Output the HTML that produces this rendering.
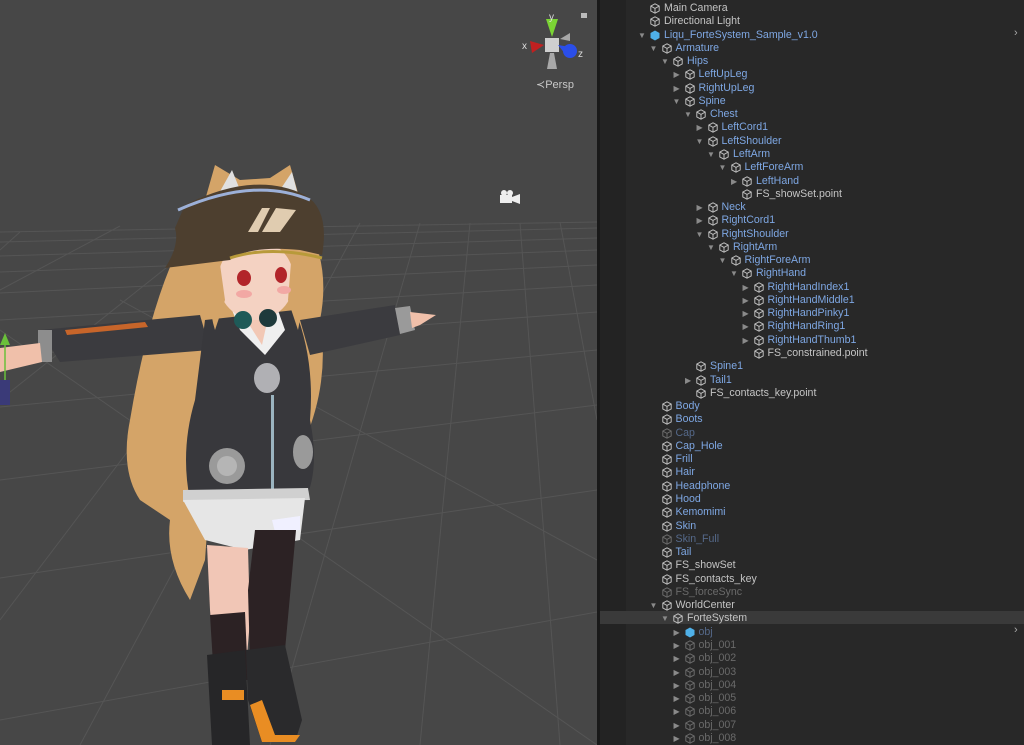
<!DOCTYPE html>
<html><head><meta charset="utf-8"><style>
html,body{margin:0;padding:0;background:#282828;width:1024px;height:745px;overflow:hidden;font-family:"Liberation Sans","DejaVu Sans",sans-serif}
#scene{position:absolute;left:0;top:0;width:597px;height:745px;background:#474747;overflow:hidden}
#div{position:absolute;left:597px;top:0;width:3px;height:745px;background:#191919}
#hier{position:absolute;left:600px;top:0;width:424px;height:745px;background:#282828}
#strip{position:absolute;left:0;top:0;width:26px;height:745px;background:#232323}
.r{position:absolute;height:13px;font-size:10.6px;line-height:13px;white-space:nowrap;color:#c4c4c4}
.r svg{position:absolute;left:0;top:1px}
.r .t{position:absolute;left:14px;top:0}
.a{position:absolute;font-size:8px;color:#8a8a8a;top:0;line-height:13px}
.b{color:#7ea7e3}.d{color:#55698a}.g{color:#6a6a6a}
</style></head><body>
<div id="scene">
<svg width="597" height="745" viewBox="0 0 597 745">
<g stroke="#555" stroke-width="1" fill="none">
<line x1="0" y1="232" x2="597" y2="222"/>
<line x1="0" y1="242" x2="597" y2="228"/>
<line x1="0" y1="256" x2="597" y2="238"/>
<line x1="0" y1="272" x2="597" y2="250"/>
<line x1="0" y1="293" x2="597" y2="265"/>
<line x1="0" y1="320" x2="597" y2="285"/>
<line x1="0" y1="356" x2="597" y2="312"/>
<line x1="0" y1="407" x2="597" y2="350"/>
<line x1="0" y1="480" x2="597" y2="405"/>
<line x1="0" y1="578" x2="597" y2="490"/>
<line x1="0" y1="720" x2="597" y2="612"/>
<line x1="20" y1="232" x2="0" y2="250"/>
<line x1="120" y1="226" x2="0" y2="290"/>
<line x1="220" y1="225" x2="0" y2="400"/>
<line x1="300" y1="224" x2="0" y2="620"/>
<line x1="360" y1="223" x2="80" y2="745"/>
<line x1="420" y1="223" x2="270" y2="745"/>
<line x1="470" y1="223" x2="420" y2="745"/>
<line x1="520" y1="223" x2="560" y2="745"/>
<line x1="560" y1="222" x2="597" y2="420"/>
<line x1="0" y1="330" x2="597" y2="745"/>
<line x1="120" y1="300" x2="597" y2="560"/>
</g>
<path d="M185 235 Q150 300 130 420 Q120 470 140 500 L170 520 Q165 560 190 600 L205 560 L215 420 L300 420 L305 440 Q330 380 320 320 Q330 270 310 230 Z" fill="#d4a468"/>
<path d="M40 330 L200 315 L210 350 L60 362 Z" fill="#3b3b3f"/>
<path d="M300 320 L395 305 L400 335 L310 355 Z" fill="#3b3b3f"/>
<rect x="38" y="330" width="14" height="32" fill="#8d8d8d"/>
<path d="M0 348 L40 343 L42 362 L0 372 Z" fill="#f0c0aa"/>
<path d="M395 308 L410 306 L415 330 L400 334 Z" fill="#9a9a9a"/>
<path d="M410 312 L436 315 L420 325 L412 328 Z" fill="#f0c0aa"/>
<path d="M65 330 L145 322 L148 327 L67 335 Z" fill="#c7652a"/>
<path d="M205 320 L295 310 Q315 360 310 420 Q320 470 305 500 L190 500 Q180 450 195 400 Z" fill="#38383c"/>
<path d="M230 305 L275 302 L285 330 L265 355 L240 330 Z" fill="#efefef"/>
<path d="M245 318 L268 318 L262 345 Z" fill="#f2c8b5"/>
<circle cx="227" cy="466" r="18" fill="#9a9a9a"/>
<circle cx="227" cy="466" r="10" fill="#b5b5b5"/>
<ellipse cx="303" cy="452" rx="10" ry="17" fill="#9a9a9a"/>
<ellipse cx="267" cy="378" rx="13" ry="15" fill="#b0b0b4"/>
<rect x="271" y="395" width="3" height="100" fill="#9bb4c0"/>
<path d="M183 490 L308 488 L310 500 L183 502 Z" fill="#d0d0d0"/>
<path d="M183 500 L305 498 L300 540 L245 550 L205 540 Z" fill="#e6e6e6"/>
<path d="M272 520 L300 516 L300 530 L275 532 Z" fill="#f0f0ff"/>
<path d="M207 545 L248 548 L250 620 L245 680 L215 670 L210 610 Z" fill="#f1c6b6"/>
<path d="M255 530 L296 530 L285 650 L250 660 L248 590 Z" fill="#2c2224"/>
<path d="M210 615 L245 612 L248 680 L214 680 Z" fill="#2c2224"/>
<path d="M207 655 L245 650 L250 745 L212 745 Z" fill="#262628"/>
<path d="M246 650 L285 645 L302 720 L295 742 L262 742 L248 700 Z" fill="#2a2a2c"/>
<rect x="222" y="690" width="22" height="10" fill="#e98d23"/>
<path d="M250 705 L262 700 L275 735 L300 735 L295 742 L262 742 Z" fill="#e98d23"/>
<ellipse cx="256" cy="280" rx="38" ry="40" fill="#f4d2c2"/>
<path d="M218 250 Q205 300 215 330 L225 300 Z M292 250 Q305 300 298 330 L288 300 Z" fill="#d4a468"/>
<ellipse cx="244" cy="278" rx="7" ry="8" fill="#b2252a"/>
<ellipse cx="281" cy="275" rx="6" ry="8" fill="#b2252a"/>
<ellipse cx="244" cy="294" rx="8" ry="4" fill="#f2a8a4"/>
<ellipse cx="284" cy="290" rx="7" ry="4" fill="#f2a8a4"/>
<circle cx="243" cy="320" r="9" fill="#1e5a58"/>
<circle cx="268" cy="318" r="9" fill="#1e3a3c"/>
<path d="M205 200 L215 165 L240 180 L270 178 L290 165 L300 200 Z" fill="#d4a468"/>
<path d="M218 195 L232 170 L240 190 Z M280 190 L292 172 L298 195 Z" fill="#e0e0e0"/>
<path d="M185 205 Q255 170 305 195 Q330 210 322 255 L300 250 Q250 245 230 260 L165 268 Q180 245 175 228 Z" fill="#4d3f2f"/>
<path d="M178 210 Q255 176 310 200" stroke="#9cb0d8" stroke-width="3" fill="none"/>
<path d="M230 258 Q270 245 322 258" stroke="#b89a3a" stroke-width="3" fill="none"/>
<path d="M248 232 L262 208 L270 208 L258 232 Z M262 232 L276 208 L296 210 L280 232 Z" fill="#e0ccb0"/>
<g transform="translate(552,45)">
<rect x="-7" y="-7" width="14" height="14" fill="#cfcfcf"/>
<path d="M0 -8 L-6 -26 L6 -26 Z" fill="#7bd434"/>
<path d="M-8 0 L-22 -4 L-20 8 Z" fill="#c02020"/>
<circle cx="18" cy="6" r="7" fill="#2b4ee8"/>
<path d="M6 0 L18 2 L14 10 Z" fill="#2b4ee8"/>
<path d="M-2 8 L2 8 L5 24 L-5 24 Z" fill="#a8a8a8"/>
<path d="M8 -6 L18 -12 L18 -4 Z" fill="#a8a8a8"/>
</g>
<text x="549" y="20" font-size="10" fill="#ddd" font-family="Liberation Sans">y</text>
<text x="522" y="49" font-size="10" fill="#ddd" font-family="Liberation Sans">x</text>
<text x="578" y="57" font-size="10" fill="#ddd" font-family="Liberation Sans">z</text>
<rect x="581" y="13" width="6" height="5" fill="#bbb"/>
<text x="536" y="88" font-size="11" fill="#c8c8c8" font-family="Liberation Sans">≺Persp</text>
<rect x="500" y="195" width="12" height="8" fill="#eee"/><circle cx="504" cy="193" r="3" fill="#eee"/><circle cx="510" cy="193" r="3" fill="#eee"/><path d="M512 197 L520 194 L520 204 L512 201Z" fill="#eee"/>
<line x1="5" y1="345" x2="5" y2="400" stroke="#6ac03a" stroke-width="1.5"/>
<path d="M0 345 L5 333 L10 345Z" fill="#6ac03a"/>
<rect x="0" y="380" width="10" height="25" fill="#3a3a78"/>
</svg>
</div>
<div id="div"></div>
<div id="hier"><div id="strip"></div>
<div style="position:absolute;left:0;top:611px;width:424px;height:13px;background:#3a3a3a"></div>
<div id="rows"></div>
<div style="position:absolute;left:414px;top:27px;color:#aaa;font-size:11px">›</div>
<div style="position:absolute;left:414px;top:624px;color:#aaa;font-size:11px">›</div>
</div>
<script>
var R=[["Main Camera",0,"",""],["Directional Light",0,"",""],["Liqu_ForteSystem_Sample_v1.0",0,"b","v","c"],["Armature",1,"b","v"],["Hips",2,"b","v"],["LeftUpLeg",3,"b",">"],["RightUpLeg",3,"b",">"],["Spine",3,"b","v"],["Chest",4,"b","v"],["LeftCord1",5,"b",">"],["LeftShoulder",5,"b","v"],["LeftArm",6,"b","v"],["LeftForeArm",7,"b","v"],["LeftHand",8,"b",">"],["FS_showSet.point",8,"",""],["Neck",5,"b",">"],["RightCord1",5,"b",">"],["RightShoulder",5,"b","v"],["RightArm",6,"b","v"],["RightForeArm",7,"b","v"],["RightHand",8,"b","v"],["RightHandIndex1",9,"b",">"],["RightHandMiddle1",9,"b",">"],["RightHandPinky1",9,"b",">"],["RightHandRing1",9,"b",">"],["RightHandThumb1",9,"b",">"],["FS_constrained.point",9,"",""],["Spine1",4,"b",""],["Tail1",4,"b",">"],["FS_contacts_key.point",4,"",""],["Body",1,"b",""],["Boots",1,"b",""],["Cap",1,"d",""],["Cap_Hole",1,"b",""],["Frill",1,"b",""],["Hair",1,"b",""],["Headphone",1,"b",""],["Hood",1,"b",""],["Kemomimi",1,"b",""],["Skin",1,"b",""],["Skin_Full",1,"d",""],["Tail",1,"b",""],["FS_showSet",1,"",""],["FS_contacts_key",1,"",""],["FS_forceSync",1,"g",""],["WorldCenter",1,"","v"],["ForteSystem",2,"","v"],["obj",3,"d",">","c"]];
for(var i=1;i<=8;i++)R.push(["obj_00"+i,3,"g",">"]);
var h="";
R.forEach(function(r,i){var x=50+r[1]*11.5,y=2+i*13.27;
var col=r[4]?"#4fb0e8":(r[2]=="g"||r[2]=="d"?"#6a6a6a":"#bdbdbd");
var ic=r[4]?'<svg width="10" height="11" viewBox="0 0 10 11"><path d="M5 0.5L9.5 3V8L5 10.5L0.5 8V3Z" fill="'+col+'"/></svg>':'<svg width="10" height="11" viewBox="0 0 10 11"><path d="M5 0.8L9.2 3.1V7.9L5 10.2L0.8 7.9V3.1ZM0.8 3.1L5 5.4L9.2 3.1M5 5.4V10.2" fill="none" stroke="'+col+'" stroke-width="1"/></svg>';
var a=r[3]=="v"?'<span class="a" style="left:-12px">▼</span>':r[3]==">"?'<span class="a" style="left:-11px">▶</span>':"";
h+='<div class="r '+r[2]+'" style="left:'+x+'px;top:'+y+'px">'+a+ic+'<span class="t">'+r[0]+'</span></div>';});
document.getElementById("rows").innerHTML=h;
</script>
</body></html>
